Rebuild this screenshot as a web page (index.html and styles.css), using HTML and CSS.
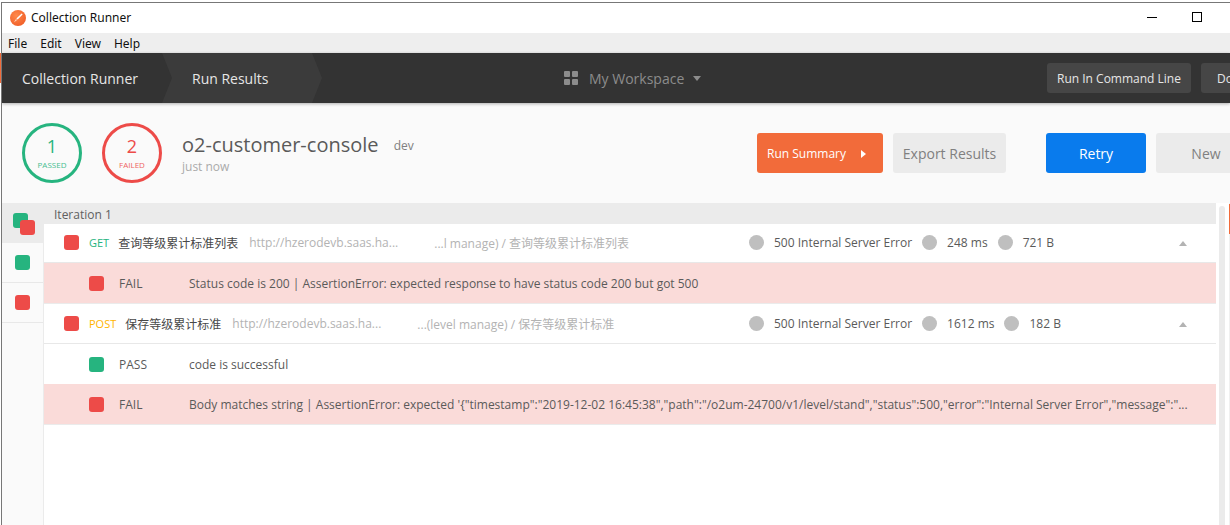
FILE: index.html
```html
<!DOCTYPE html>
<html lang="en">
<head>
  <meta charset="UTF-8" />
  <title>Collection Runner</title>
  <link rel="stylesheet" href="styles.css">
</head>
<body>
  <div class="edge-left"></div>
  <div class="edge-right"></div>

  <div class="window">
    <div class="titlebar">
      <svg class="logo" width="16" height="16" viewBox="0 0 16 16">
        <defs>
          <radialGradient id="logoFill" cx="0.4" cy="0.35" r="0.75">
            <stop offset="0" stop-color="#ff8a4c" />
            <stop offset="1" stop-color="#ef5b25" />
          </radialGradient>
        </defs>
        <circle cx="8" cy="8" r="8" fill="url(#logoFill)" />
        <path d="M11.6 3.4l1 1-5 5.2-1.2-1.1z" fill="#fff" />
        <path d="M6 9l1.1 1.1-3.3 2.3z" fill="#ffd9c4" />
      </svg>
      <span class="title-text">Collection Runner</span>
      <div class="win-controls">
        <span class="win-min"></span>
        <span class="win-max"></span>
      </div>
    </div>

    <div class="menubar">
      <span>File</span>
      <span>Edit</span>
      <span>View</span>
      <span>Help</span>
    </div>

    <div class="header">
      <div class="tab-first">Collection Runner</div>
      <div class="tab-second">Run Results</div>
      <div class="workspace">
        <svg width="14" height="14" viewBox="0 0 14 14" fill="#8c8c8c">
          <rect width="6" height="6" rx="1" />
          <rect x="8" width="6" height="6" rx="1" />
          <rect y="8" width="6" height="6" rx="1" />
          <rect x="8" y="8" width="6" height="6" rx="1" />
        </svg>
        <span class="workspace-name">My Workspace</span>
        <span class="caret-down"></span>
      </div>
      <div class="head-btn">Run In Command Line</div>
      <div class="head-btn head-btn-docs">Docs</div>
    </div>

    <div class="toolbar">
      <div class="counter counter-pass">
        <span class="counter-num">1</span>
        <span class="counter-label">PASSED</span>
      </div>
      <div class="counter counter-fail">
        <span class="counter-num">2</span>
        <span class="counter-label">FAILED</span>
      </div>
      <div class="run-info">
        <div class="run-title">
          <span class="run-name">o2-customer-console</span>
          <span class="run-env">dev</span>
        </div>
        <div class="run-time">just now</div>
      </div>
      <div class="btn btn-summary">Run Summary <span class="caret-right"></span></div>
      <div class="btn btn-export">Export Results</div>
      <div class="btn btn-retry">Retry</div>
      <div class="btn btn-new">New</div>
    </div>

    <div class="main">
      <div class="sidebar">
        <div class="side-item side-active">
          <span class="sq sq-pass side-back"></span>
          <span class="sq sq-fail side-front"></span>
        </div>
        <div class="side-item"><span class="sq sq-pass"></span></div>
        <div class="side-item"><span class="sq sq-fail"></span></div>
      </div>

      <div class="results">
        <div class="iter-head">Iteration 1</div>

        <div class="req">
          <span class="sq sq-fail"></span>
          <span class="method method-get">GET</span>
          <span class="req-name">查询等级累计标准列表</span>
          <span class="req-url">http://hzerodevb.saas.ha...</span>
          <span class="req-path">...l manage) / 查询等级累计标准列表</span>
          <div class="stats">
            <span class="dot"></span><span>500 Internal Server Error</span>
            <span class="dot"></span><span>248 ms</span>
            <span class="dot"></span><span>721 B</span>
            <span class="caret-up"></span>
          </div>
        </div>
        <div class="test test-fail">
          <span class="sq sq-fail"></span>
          <span class="test-state">FAIL</span>
          <span class="test-msg">Status code is 200 | AssertionError: expected response to have status code 200 but got 500</span>
        </div>

        <div class="req">
          <span class="sq sq-fail"></span>
          <span class="method method-post">POST</span>
          <span class="req-name">保存等级累计标准</span>
          <span class="req-url">http://hzerodevb.saas.ha...</span>
          <span class="req-path">...(level manage) / 保存等级累计标准</span>
          <div class="stats">
            <span class="dot"></span><span>500 Internal Server Error</span>
            <span class="dot"></span><span>1612 ms</span>
            <span class="dot"></span><span>182 B</span>
            <span class="caret-up"></span>
          </div>
        </div>
        <div class="test">
          <span class="sq sq-pass"></span>
          <span class="test-state">PASS</span>
          <span class="test-msg">code is successful</span>
        </div>
        <div class="test test-fail">
          <span class="sq sq-fail"></span>
          <span class="test-state">FAIL</span>
          <span class="test-msg">Body matches string | AssertionError: expected '{"timestamp":"2019-12-02 16:45:38","path":"/o2um-24700/v1/level/stand","status":500,"error":"Internal Server Error","message":"...</span>
        </div>
      </div>

      <div class="scroll-gutter"><div class="scroll-thumb"></div></div>
    </div>
  </div>
</body>
</html>
```

FILE: styles.css
```css
* {
  box-sizing: border-box;
}
html, body {
  margin: 0;
  height: 525px;
  overflow: hidden;
}
body {
  position: relative;
  padding: 2px 0 0 1px;
  background: #fff;
  font-family: "Open Sans", "Noto Sans CJK SC", sans-serif;
  font-size: 12px;
  color: #5a5a5a;
}

.edge-left {
  position: absolute;
  left: 0;
  top: 53px;
  width: 1px;
  height: 30px;
  background: #f26b3a;
}
.edge-right {
  position: absolute;
  right: 0;
  top: 204px;
  width: 1px;
  height: 30px;
  background: #f26b3a;
}

.window {
  width: 1229px;
  height: 523px;
  border-top: 1px solid #777;
  border-left: 1px solid #777;
  display: flex;
  flex-direction: column;
  overflow: hidden;
}

/* title + menu */
.titlebar {
  flex: 0 0 30px;
  display: flex;
  align-items: center;
  padding: 0 28px 2px 8px;
  background: #fff;
  font-family: "Noto Sans", sans-serif;
  color: #111;
}
.logo {
  margin-top: 2px;
}
.title-text {
  margin-left: 5px;
}
.win-controls {
  margin-left: auto;
  display: flex;
  align-items: center;
  gap: 35px;
}
.win-min {
  width: 10px;
  height: 1px;
  background: #000;
}
.win-max {
  width: 10px;
  height: 10px;
  border: 1px solid #000;
}
.menubar {
  flex: 0 0 20px;
  display: flex;
  align-items: center;
  gap: 13px;
  padding-left: 6px;
  background: #eee;
  font-family: "Noto Sans", sans-serif;
  color: #111;
}

/* dark header */
.header {
  flex: 0 0 50px;
  display: flex;
  align-items: center;
  background: #333;
  color: #e6e6e6;
  font-size: 14px;
  overflow: hidden;
  box-shadow: 0 1px 3px rgba(0, 0, 0, 0.3);
  position: relative;
}
.tab-first {
  flex: 0 0 160px;
  padding-left: 20px;
}
.tab-second {
  flex: 0 0 160px;
  height: 50px;
  line-height: 52px;
  padding-left: 30px;
  background: #3b3b3b;
  clip-path: polygon(0 0, 150px 0, 160px 25px, 150px 50px, 0 50px, 10px 25px);
}
.workspace {
  flex: 0 0 725px;
  display: flex;
  align-items: center;
  padding-left: 242px;
  color: #8c8c8c;
}
.workspace-name {
  margin-left: 11px;
}
.caret-down {
  margin-left: 9px;
  border-left: 4px solid transparent;
  border-right: 4px solid transparent;
  border-top: 5px solid #8c8c8c;
}
.head-btn {
  flex: none;
  height: 30px;
  line-height: 31px;
  padding: 0 10px;
  margin-right: 10px;
  background: #464646;
  border-radius: 3px;
  font-size: 12px;
  white-space: nowrap;
}
.head-btn-docs {
  padding: 0 16px;
}

/* run summary toolbar */
.toolbar {
  flex: 0 0 100px;
  display: flex;
  align-items: flex-start;
  padding: 20px 0 0 20px;
  background: #fafafa;
  overflow: hidden;
}
.counter {
  flex: none;
  width: 60px;
  height: 60px;
  margin-right: 20px;
  border: 3px solid;
  border-radius: 50%;
  display: flex;
  flex-direction: column;
  align-items: center;
  padding-top: 10px;
}
.counter-pass {
  border-color: #26b47f;
  color: #26b47f;
}
.counter-fail {
  border-color: #ed4b48;
  color: #ed4b48;
}
.counter-num {
  font-size: 18px;
  line-height: 20px;
}
.counter-label {
  font-size: 8px;
  line-height: 12px;
  margin-top: 3px;
  opacity: 0.85;
}
.run-info {
  flex: 0 0 575px;
  padding-top: 8px;
}
.run-name {
  font-size: 20px;
  line-height: 27px;
}
.run-env {
  margin-left: 12px;
  color: #808080;
  vertical-align: 2px;
}
.run-time {
  color: #aaa;
  line-height: 16px;
  margin-top: 1px;
}
.btn {
  flex: none;
  height: 40px;
  margin-top: 10px;
  margin-right: 10px;
  line-height: 42px;
  text-align: center;
  border-radius: 3px;
  font-size: 14px;
}
.btn-summary {
  width: 126px;
  padding-left: 10px;
  text-align: left;
  background: #f26b3a;
  color: #fff;
  font-size: 12px;
}
.caret-right {
  display: inline-block;
  margin-left: 12px;
  border-top: 4px solid transparent;
  border-bottom: 4px solid transparent;
  border-left: 5px solid #fff;
}
.btn-export {
  width: 113px;
  margin-right: 40px;
  background: #ebebeb;
  color: #808080;
}
.btn-retry {
  width: 100px;
  background: #097bed;
  color: #fff;
}
.btn-new {
  width: 100px;
  background: #ebebeb;
  color: #808080;
}

/* results */
.main {
  flex: 1;
  display: flex;
  min-height: 0;
}
.sidebar {
  flex: 0 0 42px;
  background: #fafafa;
  border-right: 1px solid #ebebeb;
}
.side-item {
  position: relative;
  height: 40px;
  border-bottom: 1px solid #e8e8e8;
  display: flex;
  justify-content: center;
  align-items: center;
}
.side-active {
  background: #ebebeb;
  border-bottom: 0;
}
.side-back {
  position: absolute;
  left: 11px;
  top: 10px;
}
.side-front {
  position: absolute;
  left: 18px;
  top: 17px;
  z-index: 2;
}
.sq {
  flex: none;
  width: 15px;
  height: 15px;
  border-radius: 3px;
}
.sq-pass {
  background: #26b47f;
}
.sq-fail {
  background: #ed4b48;
}

.results {
  flex: 0 0 1172px;
  background: #fff;
}
.iter-head {
  position: relative;
  height: 21px;
  line-height: 23px;
  margin-bottom: -1px;
  margin-left: -1px;
  padding-left: 11px;
  background: #ebebeb;
  color: #606060;
}
.req {
  height: 40px;
  display: flex;
  align-items: center;
  padding-left: 20px;
  border-bottom: 1px solid #e8e8e8;
  white-space: nowrap;
}
.method {
  margin-left: 10px;
  margin-right: 9px;
  font-size: 11px;
}
.method-get {
  color: #26b47f;
}
.method-post {
  color: #ffb400;
}
.req-name {
  margin-right: 11px;
  color: #484848;
}
.req-url {
  color: #b3b3b3;
  margin-right: 36px;
}
.req-path {
  color: #b3b3b3;
  flex: 1;
}
.stats {
  flex: 0 0 467px;
  display: flex;
  align-items: center;
  gap: 10px;
  padding-right: 29px;
}
.dot {
  width: 15px;
  height: 15px;
  border-radius: 50%;
  background: #bfbfbf;
}
.caret-up {
  margin-left: auto;
  margin-top: 1px;
  border-left: 4px solid transparent;
  border-right: 4px solid transparent;
  border-bottom: 5px solid #b3b3b3;
}
.test {
  height: 40px;
  display: flex;
  align-items: center;
  padding-left: 45px;
  white-space: nowrap;
  overflow: hidden;
}
.test-fail {
  height: 41px;
  background: #fadbd9;
  border-bottom: 1px solid #ebebeb;
}
.test-state {
  flex: 0 0 70px;
  margin-left: 15px;
}

/* scrollbar */
.scroll-gutter {
  flex: 1;
  padding: 3px 3px 0 3px;
  border-right: 1px solid #f0f0f0;
}
.scroll-thumb {
  height: 100%;
  width: 6px;
  border-radius: 3px 3px 0 0;
  background: #ebebeb;
}
```
